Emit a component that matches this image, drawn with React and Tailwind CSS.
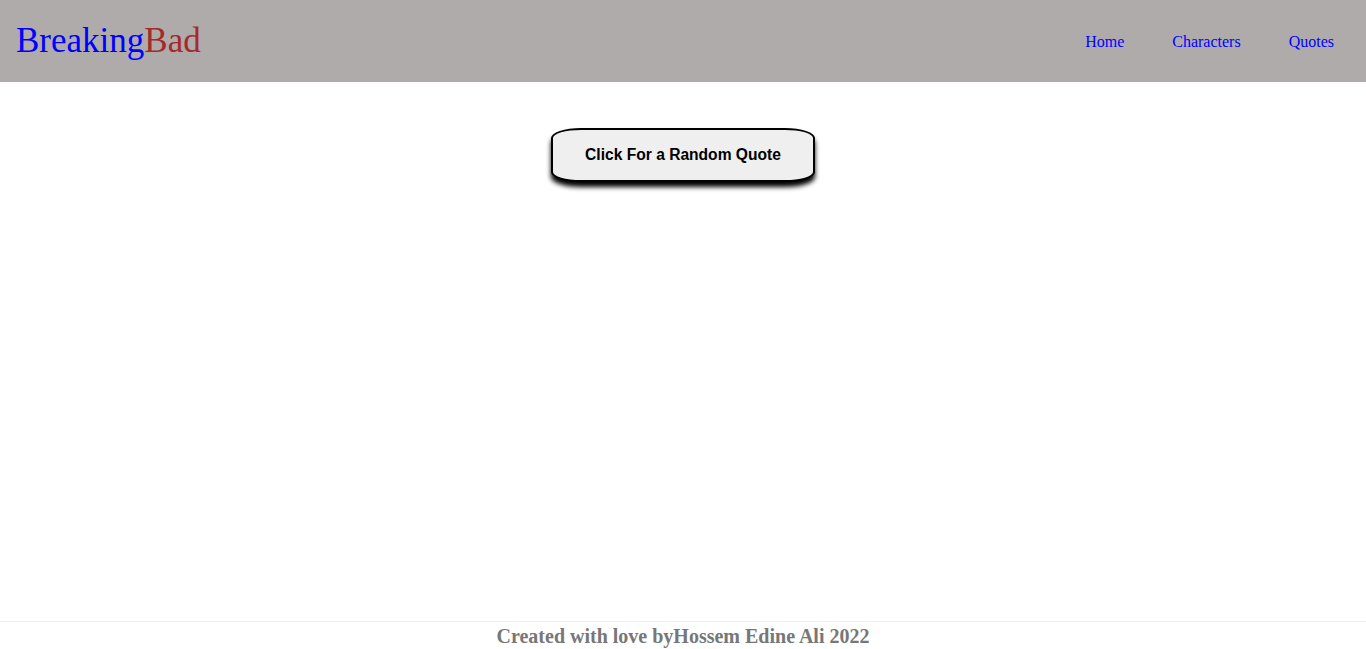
export default function App() {
  return (
    <div className="min-h-screen flex flex-col bg-white" style={{ fontFamily: '"Liberation Serif", "Times New Roman", serif' }}>
      <header className="h-[82px] bg-[#afabab] flex items-center justify-between pl-4 pr-8">
        <div className="text-[35px] leading-none pb-[1px]">
          <span className="text-[#0000ff]">Breaking</span>
          <span className="text-[#a52a2a]">Bad</span>
        </div>
        <nav className="flex items-center gap-[48px] text-base text-[#0000ff] pt-[1px]">
          <a className="cursor-pointer">Home</a>
          <a className="cursor-pointer">Characters</a>
          <a className="cursor-pointer">Quotes</a>
        </nav>
      </header>
      <main className="flex-1 flex flex-col items-center pt-[46px]">
        <button
          className="w-[264px] h-[54px] bg-[#efefef] border-2 border-black rounded-[30px/10px] shadow-[0_5px_5px_#000] text-[15.6px] font-bold text-black"
          style={{ fontFamily: '"Liberation Sans", Arial, sans-serif' }}
        >
          Click For a Random Quote
        </button>
      </main>
      <footer className="h-[28px] border-t border-[#eeeeee] flex items-center justify-center pt-[1px]">
        <h3 className="text-[20px] font-bold text-[#777777] leading-none">Created with love byHossem Edine Ali 2022</h3>
      </footer>
    </div>
  );
}
